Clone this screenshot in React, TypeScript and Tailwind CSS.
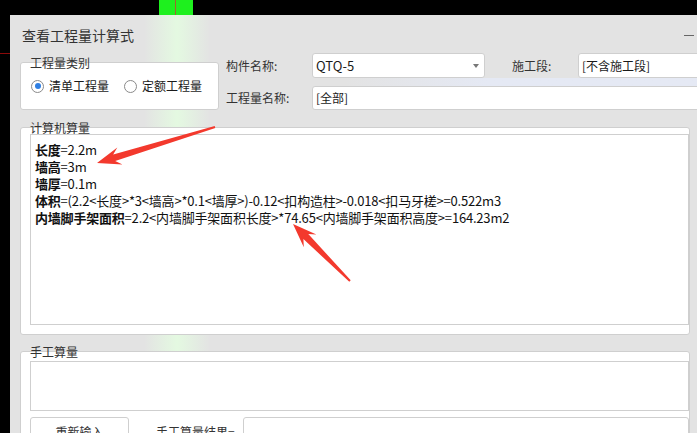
import React from 'react';

const font = { fontFamily: '"Noto Sans CJK SC", "Noto Sans", sans-serif' };

function Radio({ checked, label }: { checked?: boolean; label: string }) {
  return (
    <label className="flex items-center gap-[5px] text-[12px] text-[#1a1a1a]">
      <span className="w-[13px] h-[13px] rounded-full border border-[#8a8a8a] bg-white flex items-center justify-center">
        {checked && <span className="w-[6px] h-[6px] rounded-full bg-[#2f7fe3]" />}
      </span>
      {label}
    </label>
  );
}

function GroupBox({ title, className, children }: { title: string; className?: string; children: React.ReactNode }) {
  return (
    <div className={`relative bg-white border border-[#cfcfcf] rounded-[3px] ${className ?? ''}`}>
      <span className="absolute left-[9px] -top-[7px] text-[12px] leading-[13px] text-[#333]">{title}</span>
      {children}
    </div>
  );
}

const lines: [string, string][] = [
  ['长度', '=2.2m'],
  ['墙高', '=3m'],
  ['墙厚', '=0.1m'],
  ['体积', '=(2.2<长度>*3<墙高>*0.1<墙厚>)-0.12<扣构造柱>-0.018<扣马牙槎>=0.522m3'],
  ['内墙脚手架面积', '=2.2<内墙脚手架面积长度>*74.65<内墙脚手架面积高度>=164.23m2'],
];

export default function App() {
  return (
    <div className="relative w-[697px] h-[433px] overflow-hidden bg-black" style={font}>
      {/* top strip */}
      <div className="h-[15px] flex">
        <div className="ml-[159px] w-[34px] h-full bg-[#1ef01e] flex">
          <div className="ml-[16px] w-[1px] h-full bg-[#a0682c]" />
        </div>
      </div>
      <div className="absolute left-0 top-[53px] w-[10px] h-[1px] bg-[#8b0a0a]" />

      <div className="flex">
        <div className="ml-[10px] w-[740px] h-[418px] bg-[#e3e3e3] relative">
          {/* light glow */}
          <div className="absolute left-[134px] top-0 w-[66px] h-full bg-gradient-to-r from-transparent via-[#e4f9e1] to-transparent" />

          <div className="relative">
            <div className="w-[690px] h-[38px] pt-[3px] pl-[12px] pr-[6px] flex items-center justify-between">
              <span className="text-[14px] text-[#333]">查看工程量计算式</span>
              <span className="w-[10px] h-[1px] bg-[#666]" />
            </div>

            <div className="flex h-[57px]">
              <GroupBox title="工程量类别" className="ml-[10px] mt-[9px] w-[199px] h-[48px] flex items-center pl-[10px] gap-[15px]">
                <Radio checked label="清单工程量" />
                <Radio label="定额工程量" />
              </GroupBox>

              <div className="ml-[7px] flex-1 flex flex-col text-[12px] text-[#333]">
                <div className="h-[25px] flex items-center">
                  <span className="w-[86px]">构件名称:</span>
                  <div className="w-[173px] h-full bg-white border border-[#cfcfcf] rounded-[3px] flex items-center justify-between pl-[3px] pr-[5px] text-[#1a1a1a]">
                    <span className="text-[13px]">QTQ-5</span>
                    <span className="w-0 h-0 border-l-[3px] border-r-[3px] border-t-[4px] border-l-transparent border-r-transparent border-t-[#777]" />
                  </div>
                  <span className="ml-[27px] w-[66px]">施工段:</span>
                  <div className="flex-1 h-full bg-white border border-[#cfcfcf] rounded-[3px] flex items-center pl-[3px] text-[#1a1a1a]">
                    [不含施工段]
                  </div>
                </div>
                <div className="h-[8px] bg-gradient-to-r from-transparent from-[25%] to-[#e5e9f4] to-[55%]" />
                <div className="h-[24px] flex items-center">
                  <span className="w-[86px]">工程量名称:</span>
                  <div className="flex-1 h-full bg-white border border-[#cfcfcf] rounded-[3px] flex items-center pl-[3px] text-[#1a1a1a]">
                    [全部]
                  </div>
                </div>
              </div>
            </div>

            <GroupBox title="计算机算量" className="ml-[10px] mr-[10px] mt-[17px] h-[208px] pt-[6px] pl-[9px] pb-[9px]">
              <div className="h-full border border-[#cfcfcf] bg-white pt-[6px] pl-[4px] text-[13px] leading-[17px] tracking-[-0.2px] text-[#111]">
                {lines.map(([k, v]) => (
                  <div key={k} className="whitespace-nowrap">
                    <span className="font-bold">{k}</span>
                    {v}
                  </div>
                ))}
              </div>
            </GroupBox>

            <GroupBox title="手工算量" className="ml-[10px] mr-[10px] mt-[16px] h-[120px] pt-[9px] pl-[9px]">
              <div className="h-[50px] border border-[#cfcfcf] bg-white" />
              <div className="mt-[6px] flex items-start text-[12px] text-[#333]">
                <div className="w-[99px] h-[26px] border border-[#cfcfcf] rounded-[3px] bg-white flex items-center justify-center pt-[4px]">
                  重新输入
                </div>
                <span className="ml-[27px] pt-[6px]">手工算量结果=</span>
                <div className="ml-[8px] flex-1 h-[26px] border border-[#cfcfcf] rounded-[3px] bg-white" />
              </div>
            </GroupBox>
          </div>
        </div>
      </div>

      {/* annotation arrows */}
      <svg className="absolute inset-0 pointer-events-none" width="697" height="433" viewBox="0 0 697 433">
        <polygon
          fill="#f3392d"
          points="214.7,126 113.2,154.4 117.3,147.4 97,163 122.5,164.6 115.2,161.1 215.3,128"
        />
        <polygon
          fill="#f3392d"
          points="350.7,280.3 308.3,234.1 316.4,234.4 293,224 303.8,247.2 303.4,239.1 349.3,281.7"
        />
      </svg>
    </div>
  );
}
